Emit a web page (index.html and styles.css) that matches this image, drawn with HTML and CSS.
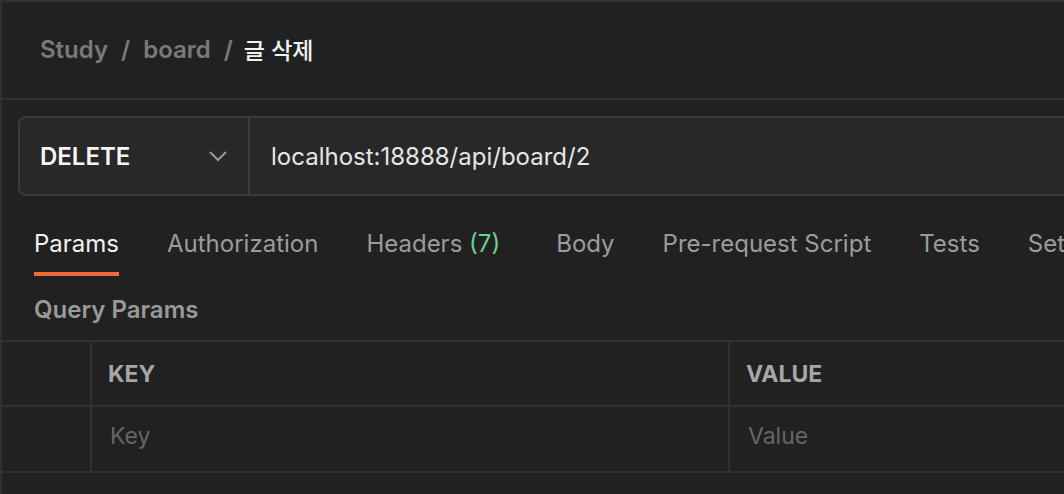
FILE: index.html
```html
<!DOCTYPE html>
<html lang="ko">
<head>
    <meta charset="UTF-8">
    <title>글 삭제</title>
    <link rel="stylesheet" href="styles.css">
</head>
<body>
<div class="page">
    <div class="crumbs">
        <span class="crumb">Study</span>
        <span class="sep">/</span>
        <span class="crumb">board</span>
        <span class="sep">/</span>
        <span class="crumb current">글 삭제</span>
    </div>

    <div class="request">
        <div class="method">
            <span>DELETE</span>
            <svg class="chevron" width="20" height="12" viewBox="0 0 20 12">
                <path d="M2 2 L10 10 L18 2" fill="none" stroke="#9a9a9a" stroke-width="2"/>
            </svg>
        </div>
        <div class="url">localhost:18888/api/board/2</div>
    </div>

    <ul class="tabs">
        <li class="on">Params</li>
        <li>Authorization</li>
        <li class="wide">Headers <span class="count">(7)</span></li>
        <li>Body</li>
        <li>Pre-request Script</li>
        <li>Tests</li>
        <li>Settings</li>
    </ul>

    <div class="section-title">Query Params</div>

    <div class="params">
        <div class="row head">
            <div class="cell check"></div>
            <div class="cell key">KEY</div>
            <div class="cell value">VALUE</div>
        </div>
        <div class="row">
            <div class="cell check"></div>
            <div class="cell key placeholder">Key</div>
            <div class="cell value placeholder">Value</div>
        </div>
    </div>
</div>
</body>
</html>
```

FILE: styles.css
```css
* {
    margin: 0;
    padding: 0;
    list-style: none;
    box-sizing: border-box;
}

html, body {
    height: 100%;
    overflow: hidden;
}

body {
    background: #212121;
    font-family: Inter, "Noto Sans CJK KR", sans-serif;
    color: #e8e8e8;
}

.page {
    height: 100%;
    border-top: 2px solid #303030;
    border-left: 2px solid #303030;
}

/* breadcrumb */
.crumbs {
    height: 98px;
    padding: 0 0 2px 38px;
    display: flex;
    align-items: center;
    gap: 13px;
    border-bottom: 2px solid #303030;
    font-size: 24px;
    font-weight: 600;
    color: #7a7a7a;
}

.crumbs .current {
    margin-left: -2px;
    font-size: 23px;
    color: #f2f2f2;
    font-weight: 500;
}

/* method + url */
.request {
    display: flex;
    height: 80px;
    margin: 16px -40px 0 16px;
    background: #282828;
    border: 2px solid #3a3a3a;
    border-radius: 8px;
}

.method {
    width: 230px;
    display: flex;
    align-items: center;
    justify-content: space-between;
    padding: 0 20px 0 20px;
    border-right: 2px solid #3a3a3a;
    font-size: 24px;
    font-weight: 600;
    color: #f5f5f5;
}

.url {
    display: flex;
    align-items: center;
    padding-left: 21px;
    font-size: 24px;
    color: #e6e6e6;
}

/* tabs */
.tabs {
    display: flex;
    gap: 48px;
    padding: 24px 0 0 32px;
    font-size: 24px;
    color: #9c9c9c;
    white-space: nowrap;
}

.tabs li {
    line-height: 48px;
    padding-bottom: 4px;
    border-bottom: 4px solid transparent;
}

.tabs li.on {
    color: #f2f2f2;
    border-bottom-color: #f0693a;
}

.tabs li.wide {
    margin-right: 8px;
}

.tabs .count {
    color: #6fcf8e;
}

.section-title {
    margin-top: 18px;
    padding-left: 32px;
    line-height: 32px;
    font-size: 24px;
    font-weight: 600;
    color: #9a9a9a;
}

/* params table */
.params {
    margin-top: 14px;
    border-top: 2px solid #303030;
}

.row {
    display: flex;
    height: 65px;
    border-bottom: 2px solid #303030;
}

.row + .row {
    height: 66px;
}

.cell {
    display: flex;
    align-items: center;
    font-size: 23px;
}

.cell.check {
    width: 90px;
    border-right: 2px solid #303030;
}

.cell.key {
    width: 638px;
    padding-left: 16px;
    border-right: 2px solid #303030;
}

.cell.value {
    flex: 1;
    padding-left: 16px;
}

.head .cell {
    font-weight: 700;
    color: #a6a6a6;
}

.cell.placeholder {
    color: #666;
    padding-bottom: 6px;
}

.cell.key.placeholder {
    padding-left: 18px;
}

.cell.value.placeholder {
    padding-left: 18px;
}
```
